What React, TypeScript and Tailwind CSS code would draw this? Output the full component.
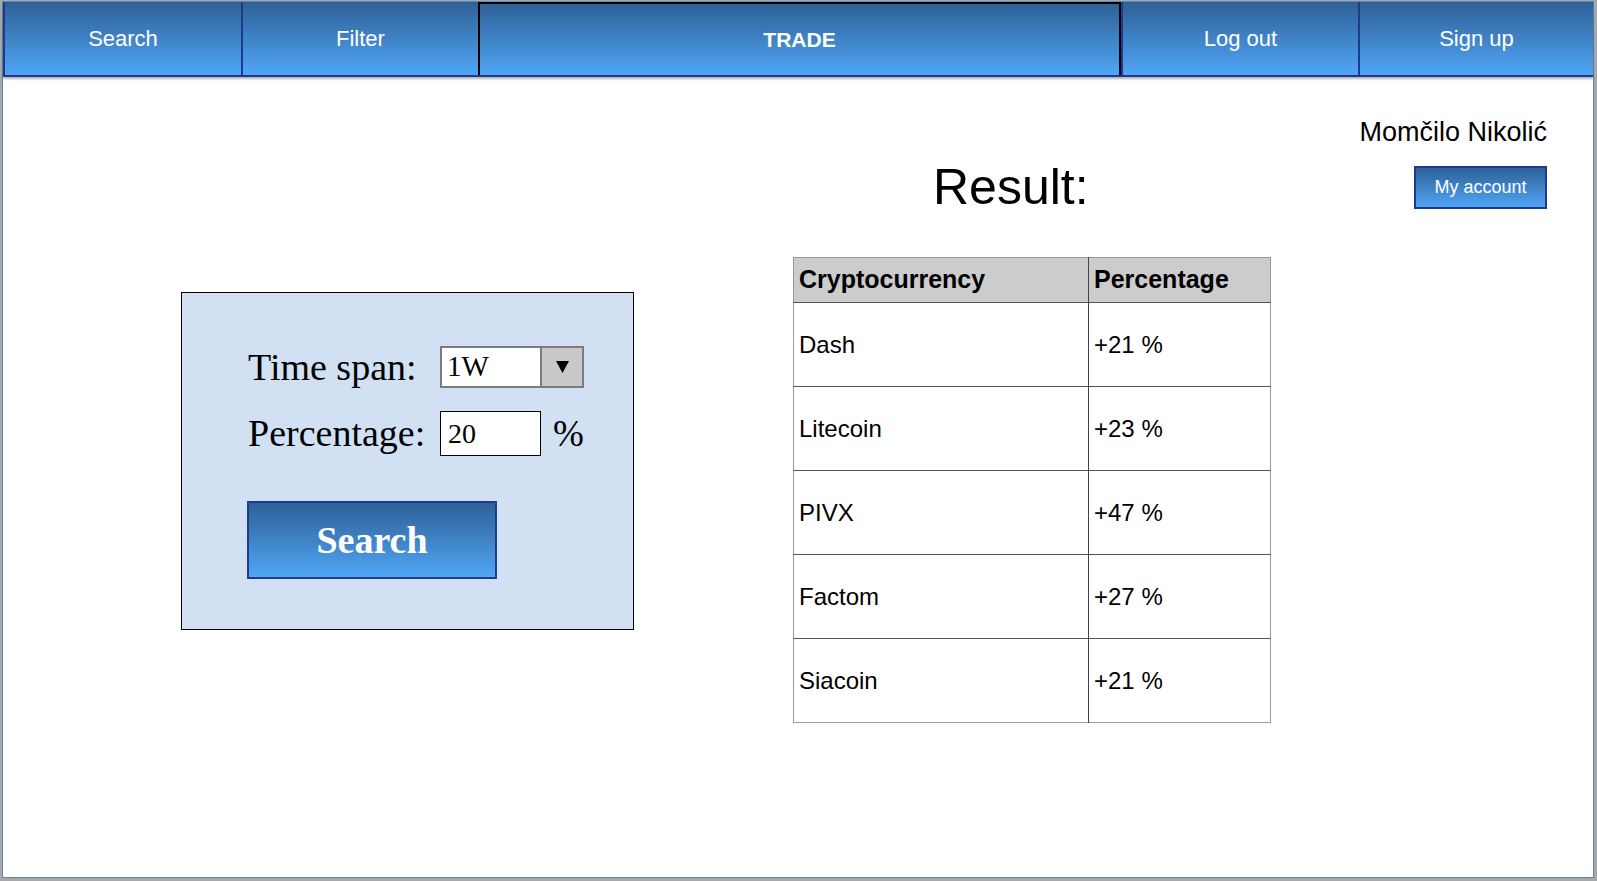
const navBtn =
  "flex items-center justify-center h-full bg-gradient-to-b from-[#2f6197] to-[#50a6f7] text-white text-[22px] border-l-2 border-[#1f3a8c]";

const rows = [
  { name: "Dash", pct: "+21 %" },
  { name: "Litecoin", pct: "+23 %" },
  { name: "PIVX", pct: "+47 %" },
  { name: "Factom", pct: "+27 %" },
  { name: "Siacoin", pct: "+21 %" },
];

function Nav() {
  return (
    <nav className="flex h-[75px] shrink-0 border-b-2 border-[#1f3a8c] shadow-[0_2px_2px_rgba(0,0,0,0.3)] font-['Liberation_Sans',Arial,sans-serif]">
      <a className={`${navBtn} w-[238px]`}>Search</a>
      <a className={`${navBtn} w-[237px]`}>Filter</a>
      <a className="flex items-center justify-center h-full w-[643px] bg-gradient-to-b from-[#2f6197] to-[#50a6f7] text-white text-[21px] font-bold border-2 border-black border-b-0">
        TRADE
      </a>
      <a className={`${navBtn} w-[237px] border-l-0`}>Log out</a>
      <a className={`${navBtn} flex-1`}>Sign up</a>
    </nav>
  );
}

function SearchPanel() {
  return (
    <div className="mt-[215px] ml-[178px] w-[453px] h-[338px] border border-black bg-[#d1e1f3] pl-[66px] pt-[53px] font-['Liberation_Serif','Times_New_Roman',serif] text-black">
      <div className="flex items-center h-[42px]">
        <span className="w-[192px] text-[38px]">Time span:</span>
        <div className="flex w-[144px] h-[42px] border-2 border-[#7b7b7b]">
          <div className="flex-1 bg-white flex items-center pl-[5px] text-[29px]">1W</div>
          <div className="w-[42px] bg-[#c8c8c8] border-l-2 border-[#7b7b7b] flex items-center justify-center">
            <svg width="13" height="12" viewBox="0 0 13 12">
              <polygon points="0,0 13,0 6.5,12" fill="black" />
            </svg>
          </div>
        </div>
      </div>
      <div className="flex items-center h-[45px] mt-[23px]">
        <span className="w-[192px] text-[38px]">Percentage:</span>
        <div className="w-[101px] h-[45px] border border-black bg-white flex items-center pl-[7px] text-[28px]">20</div>
        <span className="ml-[12px] text-[37px]">%</span>
      </div>
      <button className="mt-[45px] -ml-[1px] w-[250px] h-[78px] border-2 border-[#1f3a8c] bg-gradient-to-b from-[#2f6197] to-[#50a6f7] text-white text-[38px] font-bold">
        Search
      </button>
    </div>
  );
}

function ResultTable() {
  return (
    <table className="mt-[45px] w-[478px] border-collapse border border-[#999] text-[24px] text-black">
      <thead>
        <tr className="h-[45px] bg-[#cccccc] text-[25px]">
          <th className="w-[295px] text-left font-bold pl-[5px] border-r border-[#444]">Cryptocurrency</th>
          <th className="text-left font-bold pl-[5px]">Percentage</th>
        </tr>
      </thead>
      <tbody>
        {rows.map((r) => (
          <tr key={r.name} className="h-[84px] border-t border-[#555]">
            <td className="pl-[5px] border-r border-[#444]">{r.name}</td>
            <td className="pl-[5px]">{r.pct}</td>
          </tr>
        ))}
      </tbody>
    </table>
  );
}

export default function App() {
  return (
    <div className="w-[1597px] h-[881px] bg-[#a8a8a8] pt-[1px] pl-[2px]">
      <div className="w-[1592px] h-[877px] bg-white border border-[#5b86b4] flex flex-col">
        <Nav />
        <main className="flex flex-1 font-['Liberation_Sans',Arial,sans-serif]">
          <SearchPanel />

          {/* Result column */}
          <div className="ml-[159px] flex flex-col">
            <h1 className="mt-[85px] pl-[140px] text-[50px] leading-none text-black">Result:</h1>
            <ResultTable />
          </div>

          {/* Account */}
          <div className="ml-auto mr-[46px] flex flex-col items-end">
            <span className="mt-[42px] text-[27px] leading-none text-black">Momčilo Nikolić</span>
            <button className="mt-[20px] w-[133px] h-[43px] border-2 border-[#1f3a8c] bg-gradient-to-b from-[#2f6197] to-[#50a6f7] text-white text-[18px]">
              My account
            </button>
          </div>
        </main>
      </div>
    </div>
  );
}
